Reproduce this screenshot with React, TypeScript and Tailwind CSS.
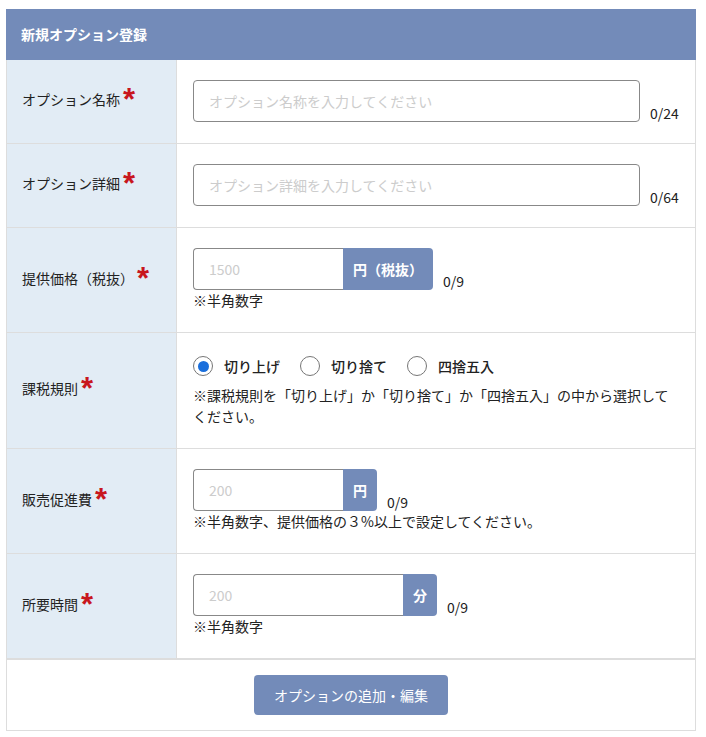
import React from 'react';

const font = { fontFamily: '"Noto Sans CJK JP", "Noto Sans", sans-serif' };

function Required() {
  return (
    <span
      className="relative -top-[2px] ml-[3px] inline-block align-middle text-[31px] font-bold leading-none text-[#c8161d]"
      style={{ fontFamily: '"Liberation Sans", sans-serif' }}
    >
      *
    </span>
  );
}

function Row({
  label,
  children,
  first,
}: {
  label: string;
  children: React.ReactNode;
  first?: boolean;
}) {
  return (
    <div className={`flex ${first ? '' : 'border-t border-[#dddddd]'}`}>
      <div className="flex w-[170px] shrink-0 items-center border-r border-[#dddddd] bg-[#e2ecf5] pl-[15px] text-[14px] text-[#222]">
        <span>
          {label}
          <Required />
        </span>
      </div>
      <div className="flex-1 pb-[21px] pl-[16px] pr-[16px] pt-[20px]">{children}</div>
    </div>
  );
}

function Counter({ text }: { text: string }) {
  return <span className="mb-[-1px] text-[14px] leading-[20px] text-[#222]">{text}</span>;
}

function AddonInput({
  placeholder,
  addon,
  inputWidth,
  count,
}: {
  placeholder: string;
  addon: string;
  inputWidth: string;
  count: string;
}) {
  return (
    <div className="flex items-end gap-[10px]">
      <div className="flex h-[42px]">
        <div
          className={`${inputWidth} flex items-center rounded-l-[4px] border border-r-0 border-[#888] pl-[15px] text-[14px] text-[#cccccc]`}
        >
          {placeholder}
        </div>
        <div className="flex items-center rounded-r-[4px] bg-[#738bb9] px-[10px] text-[14px] font-bold text-white">
          {addon}
        </div>
      </div>
      <Counter text={count} />
    </div>
  );
}

function Radio({ label, checked }: { label: string; checked?: boolean }) {
  return (
    <label className="flex items-center gap-[11px]">
      <span className="flex h-[20px] w-[20px] items-center justify-center rounded-full border border-[#767676] bg-white">
        {checked ? <span className="h-[11px] w-[11px] rounded-full bg-[#1a6fdc]" /> : null}
      </span>
      <span className="text-[14px] font-medium text-[#222]">{label}</span>
    </label>
  );
}

export default function App() {
  return (
    <div className="min-h-[737px] bg-white pt-[9px]" style={font}>
      <div className="ml-[6px] w-[690px]">
        <div className="flex h-[51px] items-center bg-[#738bb9] pl-[15px] text-[14px] font-bold text-white">
          新規オプション登録
        </div>
        <div className="border-x border-b border-[#dddddd]">
          <Row label="オプション名称" first>
            <div className="flex items-end gap-[10px]">
              <div className="flex h-[42px] w-[447px] items-center rounded-[4px] border border-[#888] pl-[15px] text-[14px] text-[#cccccc]">
                オプション名称を入力してください
              </div>
              <Counter text="0/24" />
            </div>
          </Row>
          <Row label="オプション詳細">
            <div className="flex items-end gap-[10px]">
              <div className="flex h-[42px] w-[447px] items-center rounded-[4px] border border-[#888] pl-[15px] text-[14px] text-[#cccccc]">
                オプション詳細を入力してください
              </div>
              <Counter text="0/64" />
            </div>
          </Row>
          <Row label="提供価格（税抜）">
            <AddonInput placeholder="1500" addon="円（税抜）" inputWidth="w-[150px]" count="0/9" />
            <p className="text-[14px] leading-[21px] text-[#222]">※半角数字</p>
          </Row>
          <Row label="課税規則">
            <div className="flex h-[26px] items-center gap-[20px]">
              <Radio label="切り上げ" checked />
              <Radio label="切り捨て" />
              <Radio label="四捨五入" />
            </div>
            <p className="mt-[6px] text-[14px] leading-[21px] text-[#222]">
              ※課税規則を「切り上げ」か「切り捨て」か「四捨五入」の中から選択してください。
            </p>
          </Row>
          <Row label="販売促進費">
            <AddonInput placeholder="200" addon="円" inputWidth="w-[150px]" count="0/9" />
            <p className="text-[14px] leading-[21px] text-[#222]">
              ※半角数字、提供価格の３%以上で設定してください。
            </p>
          </Row>
          <Row label="所要時間">
            <AddonInput placeholder="200" addon="分" inputWidth="w-[210px]" count="0/9" />
            <p className="text-[14px] leading-[21px] text-[#222]">※半角数字</p>
          </Row>
          <div className="flex justify-center border-t-2 border-[#dddddd] py-[15px]">
            <button className="h-[40px] rounded-[4px] bg-[#738bb9] px-[20px] text-[14px] text-white">
              オプションの追加・編集
            </button>
          </div>
        </div>
      </div>
    </div>
  );
}
